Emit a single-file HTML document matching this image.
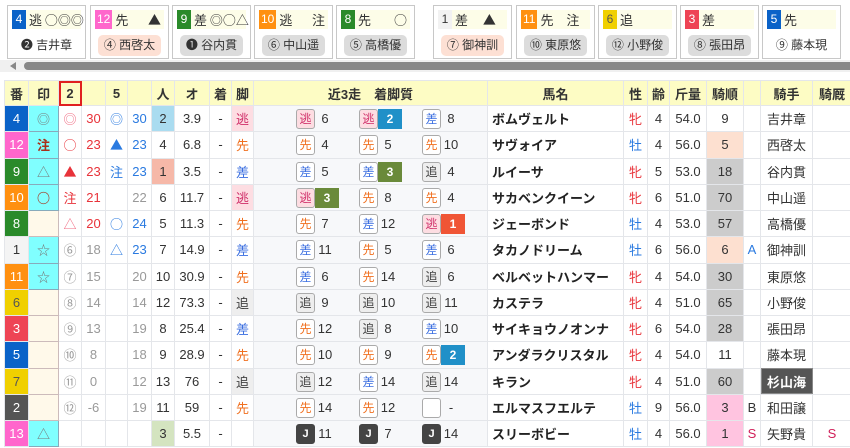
<!DOCTYPE html>
<html><head><meta charset="utf-8">
<style>
*{box-sizing:border-box;margin:0;padding:0}
body{width:850px;height:448px;overflow:hidden;background:#fff;font-family:"Liberation Sans","Noto Sans CJK JP",sans-serif;font-size:13px;color:#333;position:relative}
.m,.card .top{font-family:"Noto Sans CJK JP",sans-serif}
.card{position:absolute;top:5px;width:79px;height:54px;border:1px solid #c8c8c8;background:#fff}
.card .top{position:absolute;left:4px;right:4px;top:4px;height:19px;background:#fdfde8;font-size:13px;line-height:19px;white-space:nowrap}
.card .nb{display:inline-block;min-width:14px;height:19px;padding:0 2px;text-align:center;color:#fff;font-size:12px;vertical-align:top;margin-right:3px;font-family:"Liberation Sans",sans-serif}
.card .mk{position:absolute;right:3px;top:0}
.card .jk{position:absolute;left:0;right:0;top:29px;text-align:center;font-size:12px;line-height:20px}
.card .jk span{display:inline-block;padding:0 6px;border-radius:5px;height:21px;line-height:21px}
.pe{background:#fde0d4}.gy{background:#dcdcdc}
.scroll{position:absolute;left:0;top:60px;width:850px;height:12px;background:#f0f0f0}
.scroll .ar{position:absolute;left:10px;top:2px;width:0;height:0;border-top:4px solid transparent;border-bottom:4px solid transparent;border-right:6px solid #888}
.scroll .bar{position:absolute;left:24px;right:0;top:2px;height:8px;background:#888;border-radius:4px 0 0 4px}
table{position:absolute;left:4px;top:80px;border-collapse:collapse;table-layout:fixed;width:847px}
td,th{border:1px solid #e4e6ea;text-align:center;height:26.25px;padding:0;white-space:nowrap;overflow:hidden}
th{background:#fdfcc4;font-weight:bold;color:#333;height:25px;font-size:13px}
.h2{outline:2px solid #e02020;outline-offset:-2px}
.u{color:#fff}
.in{background:#80ffff;border:1px solid #8ab;color:#777;font-family:"Noto Sans CJK JP",sans-serif}
.ie{background:#fff9ea;border:1px solid #cbb}
.red{color:#e8333a}.pk{color:#f06a80}.bl{color:#2a7ae0}.g{color:#999}.dr{color:#a8301a}
.k{position:relative;background:#f7f8fa}
.b{position:absolute;top:3px;width:19px;height:20px;border:1px solid #aaa;border-radius:3px;font-style:normal;line-height:18px;font-size:12px;background:#fff}
.ni{background:#fddde2;color:#d0306a}.se{color:#f07020}.sa{color:#3a6ee0}.oi{background:#eee;color:#444}.J{background:#444;color:#fff;border-color:#444;font-weight:bold;font-size:11px}
.p1{left:42px}.p2{left:105px}.p3{left:168px}
.n{position:absolute;top:0;line-height:26px;width:22px;text-align:center}
.n1{left:60px}.n2{left:123px}.n3{left:186px}
.rk{position:absolute;top:3px;width:24px;height:20px;color:#fff;font-weight:bold;line-height:20px;font-size:12px}
.r1{left:61px}.r2{left:124px}.r3{left:187px}
.c1{background:#f05535}.c2{background:#2090c8}.c3{background:#6a8a3a}
.nm{text-align:left;padding-left:4px;font-weight:bold;color:#222}
.ni2{background:#fddde2;color:#d0306a}.se2{color:#f07020}.sa2{color:#3a6ee0}.oi2{background:#eee;color:#444}
.pc{background:#fde0d0}.gc{background:#cccccc}.pp{background:#ffc4e0}
.cr{color:#d0205a}
</style></head><body>

<div class="card" style="left:7px"><div class="top"><span class="nb" style="background:#0a62c8">4</span>逃 ○◎◎</div><div class="jk">❷ 吉井章</div></div>
<div class="card" style="left:90px"><div class="top"><span class="nb" style="background:#ff66cc">12</span>先<span class="mk">▲</span></div><div class="jk"><span class="pe">④ 西啓太</span></div></div>
<div class="card" style="left:172px"><div class="top"><span class="nb" style="background:#2a8a2a">9</span>差 ◎○△</div><div class="jk"><span class="gy">❶ 谷内貫</span></div></div>
<div class="card" style="left:254px"><div class="top"><span class="nb" style="background:#ff9010">10</span>逃<span class="mk">注</span></div><div class="jk"><span class="gy">⑥ 中山遥</span></div></div>
<div class="card" style="left:336px"><div class="top"><span class="nb" style="background:#2a8a2a">8</span>先<span class="mk">○</span></div><div class="jk"><span class="gy">⑤ 高橋優</span></div></div>
<div class="card" style="left:433px"><div class="top"><span class="nb" style="background:#f2f2f2;color:#333">1</span>差 <span style="margin-left:12px">▲</span></div><div class="jk"><span class="pe">⑦ 御神訓</span></div></div>
<div class="card" style="left:516px"><div class="top"><span class="nb" style="background:#ff9010">11</span>先 <span style="margin-left:10px">注</span></div><div class="jk"><span class="gy">⑩ 東原悠</span></div></div>
<div class="card" style="left:598px"><div class="top"><span class="nb" style="background:#f0d000;color:#555">6</span>追</div><div class="jk"><span class="gy">⑫ 小野俊</span></div></div>
<div class="card" style="left:680px"><div class="top"><span class="nb" style="background:#ee4455">3</span>差</div><div class="jk"><span class="gy">⑧ 張田昂</span></div></div>
<div class="card" style="left:762px"><div class="top"><span class="nb" style="background:#0a62c8">5</span>先</div><div class="jk">⑨ 藤本現</div></div>

<div class="scroll"><div class="ar"></div><div class="bar"></div></div>

<table>
<colgroup><col style="width:24px"><col style="width:30px"><col style="width:23px"><col style="width:24px"><col style="width:22px"><col style="width:24px"><col style="width:23px"><col style="width:35px"><col style="width:22px"><col style="width:22px"><col style="width:234px"><col style="width:136px"><col style="width:24px"><col style="width:22px"><col style="width:37px"><col style="width:37px"><col style="width:17px"><col style="width:52px"><col style="width:39px"></colgroup>
<tr><th>番</th><th>印</th><th class="h2">2</th><th></th><th>5</th><th></th><th>人</th><th>オ</th><th>着</th><th>脚</th><th>近3走　着脚質</th><th>馬名</th><th>性</th><th>齢</th><th>斤量</th><th>騎順</th><th></th><th>騎手</th><th>騎厩</th></tr>

<tr><td class="u" style="background:#0a62c8">4</td><td class="in">◎</td><td class="pk m">◎</td><td class="red">30</td><td class="bl m">◎</td><td class="bl">30</td><td style="background:#aadcf0">2</td><td>3.9</td><td>-</td><td class="ni2">逃</td>
<td class="k"><i class="b ni p1">逃</i><span class="n n1">6</span><i class="b ni p2">逃</i><span class="rk r2 c2">2</span><i class="b sa p3">差</i><span class="n n3">8</span></td>
<td class="nm">ボムヴェルト</td><td class="red">牝</td><td>4</td><td>54.0</td><td>9</td><td></td><td>吉井章</td><td></td></tr>

<tr><td class="u" style="background:#ff66cc">12</td><td class="in dr" style="font-weight:bold">注</td><td class="red m">○</td><td class="red">23</td><td class="bl m">▲</td><td class="bl">23</td><td>4</td><td>6.8</td><td>-</td><td class="se2">先</td>
<td class="k"><i class="b se p1">先</i><span class="n n1">4</span><i class="b se p2">先</i><span class="n n2">5</span><i class="b se p3">先</i><span class="n n3">10</span></td>
<td class="nm">サヴォイア</td><td class="bl">牡</td><td>4</td><td>56.0</td><td class="pc">5</td><td></td><td>西啓太</td><td></td></tr>

<tr><td class="u" style="background:#2a8a2a">9</td><td class="in">△</td><td class="red m">▲</td><td class="red">23</td><td class="bl">注</td><td class="bl">23</td><td style="background:#f6b8a8">1</td><td>3.5</td><td>-</td><td class="sa2">差</td>
<td class="k"><i class="b sa p1">差</i><span class="n n1">5</span><i class="b sa p2">差</i><span class="rk r2 c3">3</span><i class="b oi p3">追</i><span class="n n3">4</span></td>
<td class="nm">ルイーサ</td><td class="red">牝</td><td>5</td><td>53.0</td><td class="gc">18</td><td></td><td>谷内貫</td><td></td></tr>

<tr><td class="u" style="background:#ff9010">10</td><td class="in dr" style="font-weight:bold">○</td><td class="red">注</td><td class="red">21</td><td></td><td class="g">22</td><td>6</td><td>11.7</td><td>-</td><td class="ni2">逃</td>
<td class="k"><i class="b ni p1">逃</i><span class="rk r1 c3">3</span><i class="b se p2">先</i><span class="n n2">8</span><i class="b se p3">先</i><span class="n n3">4</span></td>
<td class="nm">サカベンクイーン</td><td class="red">牝</td><td>6</td><td>51.0</td><td class="gc">70</td><td></td><td>中山遥</td><td></td></tr>

<tr><td class="u" style="background:#2a8a2a">8</td><td class="ie"></td><td class="pk m">△</td><td class="red">20</td><td class="bl m">○</td><td class="bl">24</td><td>5</td><td>11.3</td><td>-</td><td class="se2">先</td>
<td class="k"><i class="b se p1">先</i><span class="n n1">7</span><i class="b sa p2">差</i><span class="n n2">12</span><i class="b ni p3">逃</i><span class="rk r3 c1">1</span></td>
<td class="nm">ジェーボンド</td><td class="bl">牡</td><td>4</td><td>53.0</td><td class="gc">57</td><td></td><td>高橋優</td><td></td></tr>

<tr><td style="background:#f4f4f4">1</td><td class="in">☆</td><td class="g m">⑥</td><td class="g">18</td><td class="bl m">△</td><td class="bl">23</td><td>7</td><td>14.9</td><td>-</td><td class="sa2">差</td>
<td class="k"><i class="b sa p1">差</i><span class="n n1">11</span><i class="b se p2">先</i><span class="n n2">5</span><i class="b sa p3">差</i><span class="n n3">6</span></td>
<td class="nm">タカノドリーム</td><td class="bl">牡</td><td>6</td><td>56.0</td><td class="pc">6</td><td class="bl">A</td><td>御神訓</td><td></td></tr>

<tr><td class="u" style="background:#ff9010">11</td><td class="in">☆</td><td class="g m">⑦</td><td class="g">15</td><td></td><td class="g">20</td><td>10</td><td>30.9</td><td>-</td><td class="se2">先</td>
<td class="k"><i class="b sa p1">差</i><span class="n n1">6</span><i class="b se p2">先</i><span class="n n2">14</span><i class="b oi p3">追</i><span class="n n3">6</span></td>
<td class="nm">ベルベットハンマー</td><td class="red">牝</td><td>4</td><td>54.0</td><td class="gc">30</td><td></td><td>東原悠</td><td></td></tr>

<tr><td style="background:#f0d000;color:#555">6</td><td class="ie"></td><td class="g m">⑧</td><td class="g">14</td><td></td><td class="g">14</td><td>12</td><td>73.3</td><td>-</td><td class="oi2">追</td>
<td class="k"><i class="b oi p1">追</i><span class="n n1">9</span><i class="b oi p2">追</i><span class="n n2">10</span><i class="b oi p3">追</i><span class="n n3">11</span></td>
<td class="nm">カステラ</td><td class="red">牝</td><td>4</td><td>51.0</td><td class="gc">65</td><td></td><td>小野俊</td><td></td></tr>

<tr><td class="u" style="background:#ee4455">3</td><td class="ie"></td><td class="g m">⑨</td><td class="g">13</td><td></td><td class="g">19</td><td>8</td><td>25.4</td><td>-</td><td class="sa2">差</td>
<td class="k"><i class="b se p1">先</i><span class="n n1">12</span><i class="b oi p2">追</i><span class="n n2">8</span><i class="b sa p3">差</i><span class="n n3">10</span></td>
<td class="nm">サイキョウノオンナ</td><td class="red">牝</td><td>6</td><td>54.0</td><td class="gc">28</td><td></td><td>張田昂</td><td></td></tr>

<tr><td class="u" style="background:#0a62c8">5</td><td class="ie"></td><td class="g m">⑩</td><td class="g">8</td><td></td><td class="g">18</td><td>9</td><td>28.9</td><td>-</td><td class="se2">先</td>
<td class="k"><i class="b se p1">先</i><span class="n n1">10</span><i class="b se p2">先</i><span class="n n2">9</span><i class="b se p3">先</i><span class="rk r3 c2">2</span></td>
<td class="nm">アンダラクリスタル</td><td class="red">牝</td><td>4</td><td>54.0</td><td>11</td><td></td><td>藤本現</td><td></td></tr>

<tr><td style="background:#f0d000;color:#555">7</td><td class="ie"></td><td class="g m">⑪</td><td class="g">0</td><td></td><td class="g">12</td><td>13</td><td>76</td><td>-</td><td class="oi2">追</td>
<td class="k"><i class="b oi p1">追</i><span class="n n1">12</span><i class="b sa p2">差</i><span class="n n2">14</span><i class="b oi p3">追</i><span class="n n3">14</span></td>
<td class="nm">キラン</td><td class="red">牝</td><td>4</td><td>51.0</td><td class="gc">60</td><td></td><td style="background:#555;color:#fff;font-weight:bold;outline:1px solid #888;outline-offset:-1px">杉山海</td><td></td></tr>

<tr><td class="u" style="background:#555">2</td><td class="ie"></td><td class="g m">⑫</td><td class="g">-6</td><td></td><td class="g">19</td><td>11</td><td>59</td><td>-</td><td class="se2">先</td>
<td class="k"><i class="b se p1">先</i><span class="n n1">14</span><i class="b se p2">先</i><span class="n n2">12</span><i class="b p3"></i><span class="n n3">-</span></td>
<td class="nm">エルマスフエルテ</td><td class="bl">牡</td><td>9</td><td>56.0</td><td class="pp">3</td><td>B</td><td>和田譲</td><td></td></tr>

<tr><td class="u" style="background:#ff66cc">13</td><td class="in">△</td><td></td><td></td><td></td><td></td><td style="background:#d4e4c0">3</td><td>5.5</td><td>-</td><td></td>
<td class="k"><i class="b J p1">J</i><span class="n n1">11</span><i class="b J p2">J</i><span class="n n2">7</span><i class="b J p3">J</i><span class="n n3">14</span></td>
<td class="nm">スリーボビー</td><td class="bl">牡</td><td>4</td><td>56.0</td><td class="pp">1</td><td class="cr">S</td><td>矢野貴</td><td class="cr">S</td></tr>
</table>
</body></html>
